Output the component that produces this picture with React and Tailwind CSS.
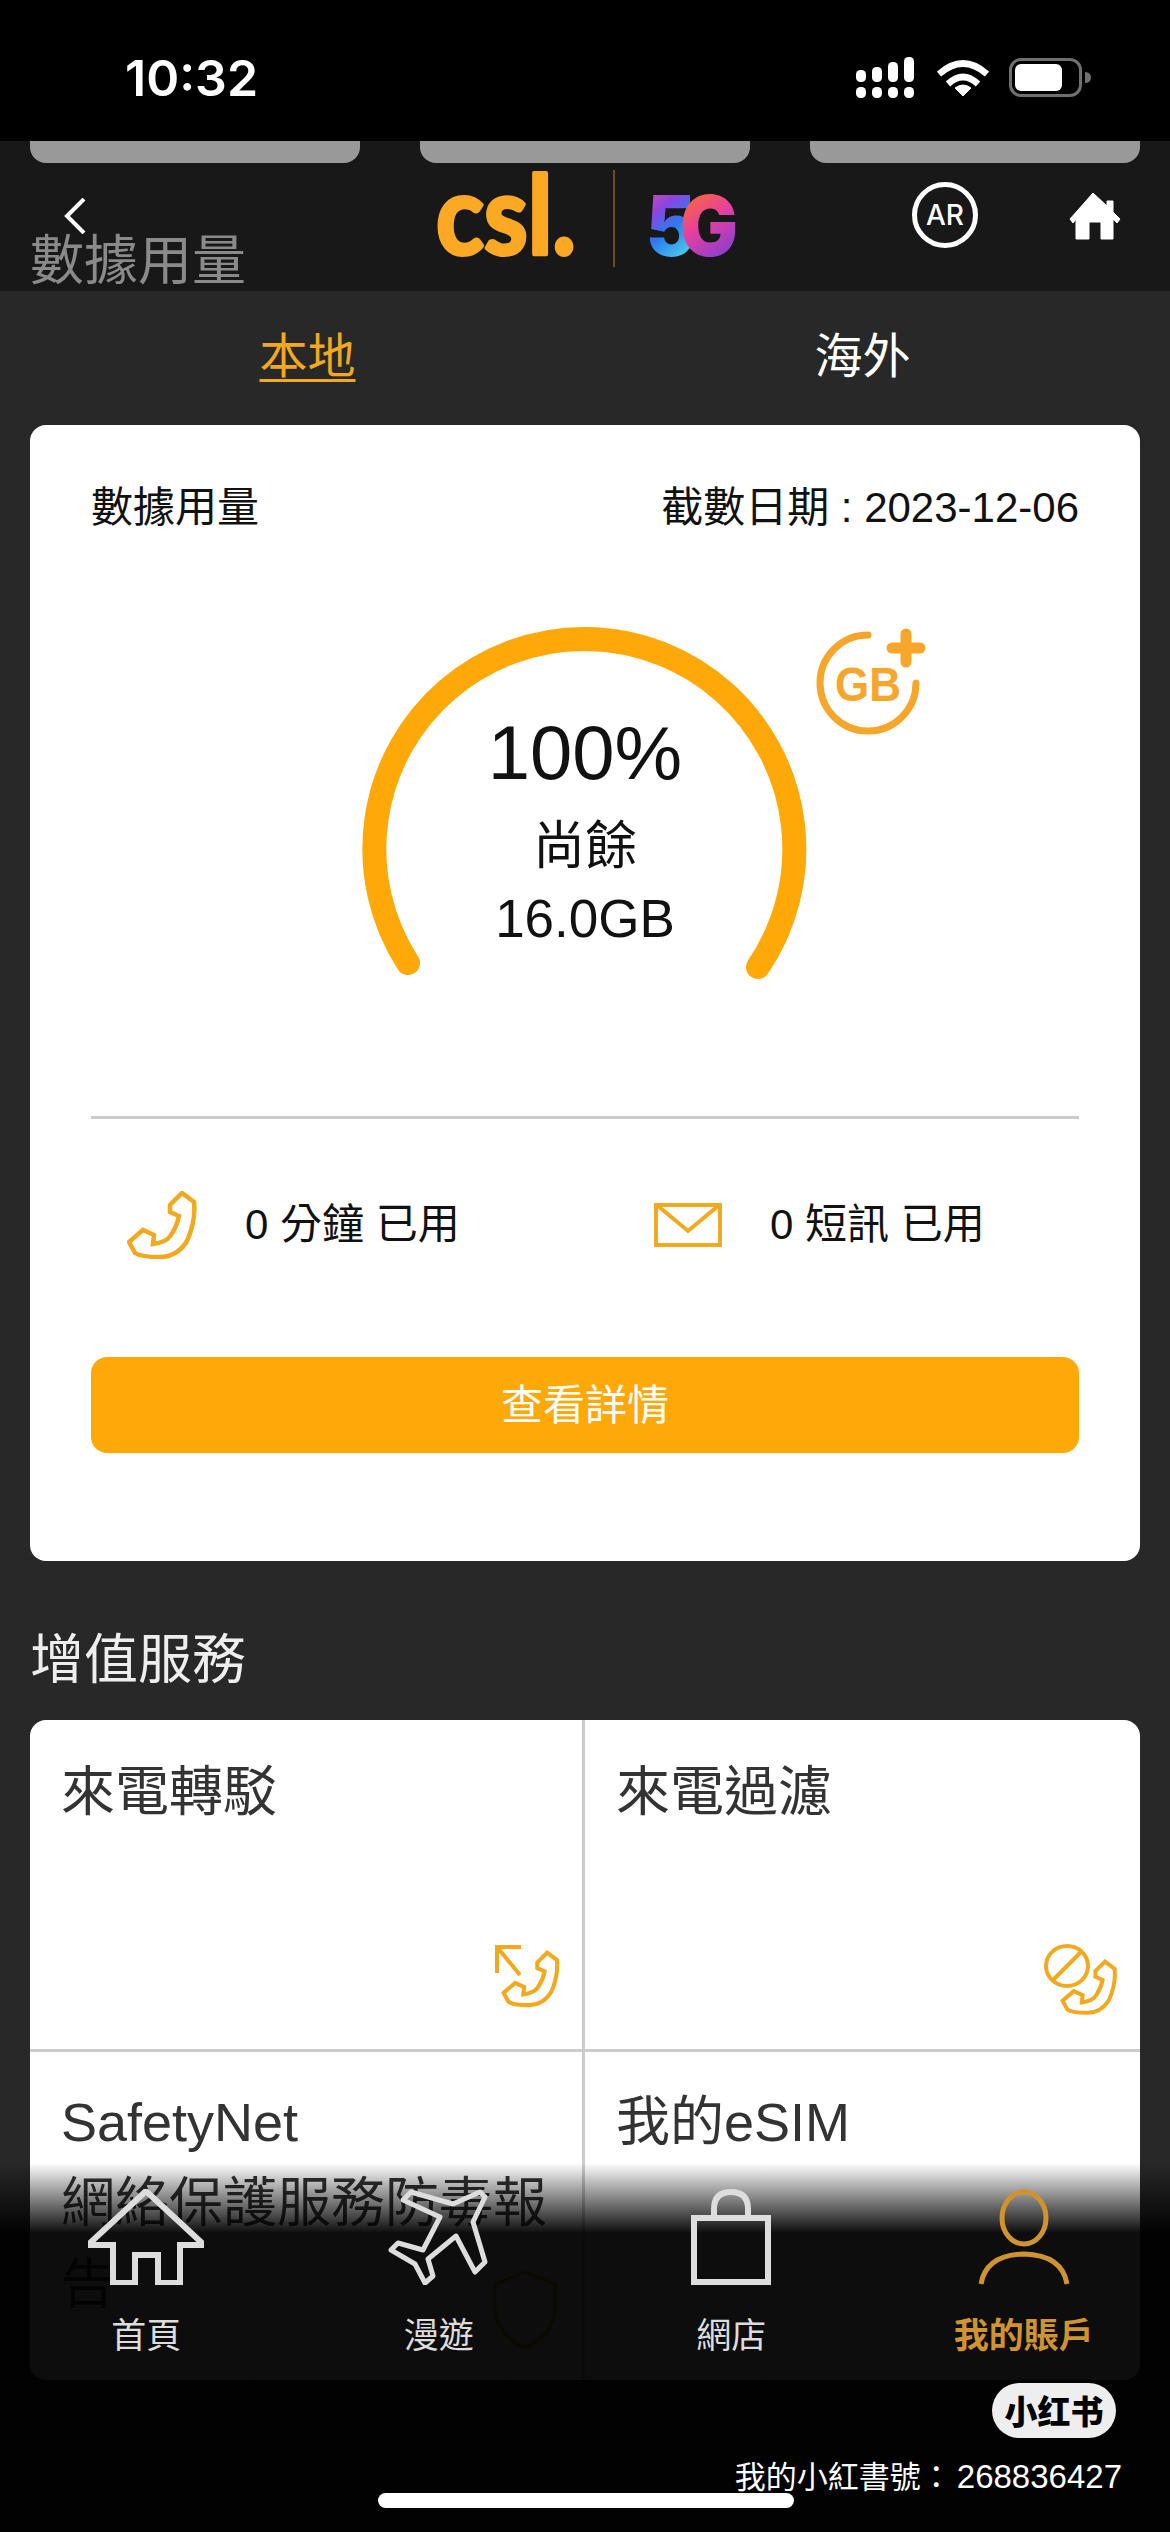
const sans = { fontFamily: '"Liberation Sans", "Noto Sans CJK TC", sans-serif' };
const orange = "#f2a91f";

// Handset outline shared by the call and service icons
function Handset({ width, height, color = orange, stroke = 4.5 }) {
  return (
    <svg width={width} height={height} viewBox="0 0 70 68" fill="none">
      <path
        d="M55 2 L67 11 Q69 30 60 50 Q50 66 33 66 Q14 66 8 62 L2 51 L16 39 L27 44 L26 53 Q40 51 44 44 Q50 35 52 25 L43 21 L43 14 Z"
        stroke={color}
        strokeWidth={stroke}
        strokeLinejoin="miter"
      />
    </svg>
  );
}

function StatusBar() {
  return (
    <div className="h-[141px] bg-black flex items-start text-white">
      <div className="ml-[125px] mt-[48px] text-[50px] leading-[60px] font-semibold" style={{ fontFamily: "Inter, sans-serif" }}>
        10:32
      </div>
      <svg className="ml-auto mt-[56px]" width="60" height="44" viewBox="0 0 60 44" fill="white">
        <rect x="1" y="14" width="10" height="12" rx="4.5" />
        <rect x="17" y="11" width="10" height="15" rx="4.5" />
        <rect x="33" y="6" width="10" height="20" rx="4.5" />
        <rect x="49" y="1" width="10" height="25" rx="4.5" />
        <rect x="1" y="31" width="10" height="11" rx="4.5" />
        <rect x="17" y="31" width="10" height="11" rx="4.5" />
        <rect x="33" y="31" width="10" height="11" rx="4.5" />
        <rect x="49" y="31" width="10" height="11" rx="4.5" />
      </svg>
      <svg className="ml-[22px] mt-[59px]" width="52" height="40" viewBox="0 0 52 40" fill="none" stroke="white" strokeWidth="6.5">
        <path d="M2 15 Q26 -6 50 15" />
        <path d="M11 25 Q26 11 41 25" />
        <path d="M26 37 L18 29 Q26 23 34 29 Z" fill="white" strokeWidth="1" />
      </svg>
      <div className="ml-[20px] mt-[58px] mr-[79px] flex items-center gap-[3px]">
        <div className="w-[73px] h-[39px] rounded-[12px] border-[3px] border-[#6f6f6f] p-[3px]">
          <div className="w-[47px] h-full bg-white rounded-[6px]" />
        </div>
        <div className="w-[6px] h-[11px] bg-[#6f6f6f] rounded-r-full" />
      </div>
    </div>
  );
}

function Logo() {
  return (
    <svg className="mt-[2px] overflow-visible" width="315" height="105" viewBox="0 0 315 105">
      <defs>
        <linearGradient id="five" x1="0.1" y1="0" x2="0.5" y2="1">
          <stop offset="0" stopColor="#ff4f8f" />
          <stop offset="0.35" stopColor="#8a45e0" />
          <stop offset="0.6" stopColor="#2a7cf0" />
          <stop offset="1" stopColor="#55dfe8" />
        </linearGradient>
        <linearGradient id="gee" x1="0.3" y1="0" x2="0.7" y2="1">
          <stop offset="0" stopColor="#ff7a10" />
          <stop offset="0.45" stopColor="#e83fa0" />
          <stop offset="1" stopColor="#6a3ee0" />
        </linearGradient>
      </defs>
      <text
        x="6"
        y="89"
        fontFamily="Lato, sans-serif"
        fontWeight="700"
        fontSize="110"
        fill="#fba824"
        stroke="#fba824"
        strokeWidth="4"
        strokeLinejoin="round"
        textLength="140"
        lengthAdjust="spacingAndGlyphs"
      >
        csl.
      </text>
      <rect x="183" y="5" width="2" height="97" fill="#6b4e22" />
      <text x="216" y="91" fontFamily="Inter, sans-serif" fontWeight="900" fontSize="84" fill="url(#five)" textLength="50" lengthAdjust="spacingAndGlyphs">
        5
      </text>
      <text x="250" y="91" fontFamily="Inter, sans-serif" fontWeight="900" fontSize="84" fill="url(#gee)" textLength="58" lengthAdjust="spacingAndGlyphs">
        G
      </text>
    </svg>
  );
}

function Header() {
  return (
    <div className="h-[150px] bg-[#181818]">
      <div className="grid grid-cols-3 gap-[60px] px-[30px]">
        <div className="h-[22px] bg-[#999999] rounded-b-[16px]" />
        <div className="h-[22px] bg-[#999999] rounded-b-[16px]" />
        <div className="h-[22px] bg-[#999999] rounded-b-[16px]" />
      </div>
      <div className="flex items-start pl-[30px]">
        <div className="w-[400px]">
          <svg className="ml-[33px] mt-[35px]" width="24" height="36" viewBox="0 0 24 36" fill="none" stroke="white" strokeWidth="4">
            <path d="M21 1 L4 18 L21 35" />
          </svg>
          <div className="text-[54px] leading-[54px] text-[#8a8a8a]" style={sans}>數據用量</div>
        </div>
        <Logo />
        <div className="ml-[167px] mt-[19px] w-[66px] h-[66px] rounded-full border-[5px] border-white flex items-center justify-center text-white text-[28px] font-medium" style={{ fontFamily: "Inter, sans-serif" }}>
          AR
        </div>
        <svg className="ml-[91px] mt-[29px]" width="52" height="48" viewBox="0 0 52 48" fill="white" stroke="white" strokeWidth="1" strokeLinejoin="round">
          <path d="M24 1 L38 14 L38 9 L44 9 L44 20 L51 27 L48 31 L44 27 L44 47 L32 47 L32 30 L20 30 L20 47 L7 47 L7 27 L4 31 L1 27 Z" />
        </svg>
      </div>
    </div>
  );
}

function Gauge() {
  return (
    <div className="relative w-[470px] h-[365px] mt-[87px] mx-auto">
      <svg width="470" height="365" viewBox="0 0 470 365" fill="none">
        <path d="M58 343 A210 210 0 1 1 408 347" stroke="#ffa908" strokeWidth="24" strokeLinecap="round" />
      </svg>
      <div className="absolute inset-0 flex flex-col items-center pt-[83px] text-[#111111]" style={sans}>
        <div className="text-[76px] leading-[100px]">100%</div>
        <div className="text-[52px] leading-[60px] mt-[13px]">尚餘</div>
        <div className="text-[53px] leading-[60px] mt-[13px]">16.0GB</div>
      </div>
      <svg className="absolute left-[466px] top-[8px]" width="110" height="110" viewBox="0 0 110 110" fill="none">
        <path d="M52 7 A48 48 0 1 0 100 55" stroke="#f6a72b" strokeWidth="7" strokeLinecap="round" />
        <path d="M90 6 V34 M76 20 H104" stroke="#f6a72b" strokeWidth="11" strokeLinecap="round" />
        <text x="19" y="73" fontFamily="Liberation Sans, sans-serif" fontWeight="700" fontSize="48" fill="#f6a72b" textLength="66" lengthAdjust="spacingAndGlyphs">GB</text>
      </svg>
    </div>
  );
}

function UsageCard() {
  return (
    <div className="mx-[30px] bg-white rounded-[16px] px-[61px] pt-[58px] pb-[108px]" style={sans}>
      <div className="flex justify-between text-[42px] leading-[50px] text-[#111111]">
        <span>數據用量</span>
        <span>截數日期 : 2023-12-06</span>
      </div>
      <Gauge />
      <div className="h-[3px] bg-[#cccccc] mt-[131px]" />
      <div className="flex items-center h-[70px] mt-[71px] text-[42px] leading-[50px] text-[#111111]">
        <div className="ml-[36px] w-[118px]">
          <Handset width={70} height={68} />
        </div>
        <span className="w-[409px]">0 分鐘 已用</span>
        <svg width="68" height="44" viewBox="0 0 68 44" fill="none" stroke={orange} strokeWidth="4">
          <rect x="2" y="2" width="64" height="40" />
          <path d="M4 3 L34 28 L64 3" />
        </svg>
        <span className="ml-[48px]">0 短訊 已用</span>
      </div>
      <div className="mt-[97px] h-[96px] rounded-[16px] bg-[#ffa908] flex items-center justify-center text-[42px] text-white">
        查看詳情
      </div>
    </div>
  );
}

function ServiceGrid() {
  return (
    <div className="mx-[30px] mt-[25px] bg-white rounded-[16px] h-[660px] overflow-hidden grid grid-cols-2 grid-rows-[332px_1fr] text-[54px] leading-[81px] text-[#333333]" style={sans}>
      <div className="border-r-[3px] border-b-[3px] border-[#cccccc] pl-[31px] pt-[32px] flex flex-col justify-between">
        <div>來電轉駁</div>
        <div className="flex justify-end pr-[22px] pb-[40px]">
          <svg width="66" height="66" viewBox="0 0 66 66" fill="none">
            <path d="M27 4 H3 V30 M3 4 L26 32" stroke={orange} strokeWidth="4" />
            <g transform="translate(8 8) scale(0.82)">
              <path d="M55 2 L67 11 Q69 30 60 50 Q50 66 33 66 Q14 66 8 62 L2 51 L16 39 L27 44 L26 53 Q40 51 44 44 Q50 35 52 25 L43 21 L43 14 Z" stroke={orange} strokeWidth="5" />
            </g>
          </svg>
        </div>
      </div>
      <div className="border-b-[3px] border-[#cccccc] pl-[31px] pt-[32px] flex flex-col justify-between">
        <div>來電過濾</div>
        <div className="flex justify-end pr-[23px] pb-[33px]">
          <svg width="73" height="72" viewBox="0 0 73 72" fill="none">
            <ellipse cx="23" cy="22" rx="21" ry="20" stroke={orange} strokeWidth="4" />
            <path d="M9 36 L37 8" stroke={orange} strokeWidth="4" />
            <g transform="translate(17 16) scale(0.8)">
              <path d="M55 2 L67 11 Q69 30 60 50 Q50 66 33 66 Q14 66 8 62 L2 51 L16 39 L27 44 L26 53 Q40 51 44 44 Q50 35 52 25 L43 21 L43 14 Z" stroke={orange} strokeWidth="5" />
            </g>
          </svg>
        </div>
      </div>
      <div className="relative border-r-[3px] border-[#cccccc] pl-[31px] pr-[30px] pt-[30px]">
        SafetyNet
        <br />
        網絡保護服務防毒報告
        <svg className="absolute left-[462px] top-[218px]" width="66" height="80" viewBox="0 0 66 80" fill="none" stroke={orange} strokeWidth="3">
          <path d="M33 2 L63 14 V40 Q60 66 33 78 Q6 66 3 40 V14 Z" />
        </svg>
      </div>
      <div className="pl-[31px] pt-[30px]">我的eSIM</div>
    </div>
  );
}

function NavItem({ label, active, children }) {
  return (
    <div className="flex flex-col items-center">
      <div className="h-[96px] flex items-end">{children}</div>
      <div className={`mt-[31px] text-[35px] leading-[40px] ${active ? "text-[#cf9430] font-bold" : "text-[#dddddd]"}`}>{label}</div>
    </div>
  );
}

function BottomBar() {
  const line = "#dddddd";
  return (
    <div className="absolute left-0 right-0 bottom-0 h-[369px] flex flex-col bg-[linear-gradient(to_bottom,rgba(0,0,0,0)_0px,rgba(0,0,0,0.95)_70px)]" style={sans}>
      <div className="grid grid-cols-4 pt-[26px]">
        <NavItem label="首頁">
          <svg width="116" height="96" viewBox="0 0 116 96" fill="none" stroke={line} strokeWidth="6" strokeLinejoin="miter">
            <path d="M58 2 L3 53 V56 H25 V94 H47 V66 H70 V94 H92 V56 H113 V53 Z" />
          </svg>
        </NavItem>
        <NavItem label="漫遊">
          <svg width="102" height="96" viewBox="15 10 102 96" fill="none" stroke={line} strokeWidth="5" strokeLinejoin="round">
            <path d="M30 21 L38 13 L80 25 L107 13 L112 18 L100 43 L112 83 L102 93 L83 57 L55 80 L60 97 L52 104 L42 85 L18 71 L25 64 L50 71 L67 38 Z" />
          </svg>
        </NavItem>
        <NavItem label="網店">
          <svg width="80" height="96" viewBox="0 0 80 96" fill="none" stroke={line}>
            <path d="M23 28 V20 Q23 3 40 3 Q57 3 57 20 V28" strokeWidth="6" />
            <rect x="3" y="29" width="74" height="64" strokeWidth="6" />
          </svg>
        </NavItem>
        <NavItem label="我的賬戶" active>
          <svg width="92" height="96" viewBox="0 0 92 96" fill="none" stroke="#cf9430" strokeWidth="5">
            <ellipse cx="46" cy="29" rx="22" ry="26" />
            <path d="M3 95 Q8 66 46 65 Q84 66 89 95" />
          </svg>
        </NavItem>
      </div>
      <div className="self-end mr-[54px] mt-[27px] w-[124px] h-[55px] rounded-full bg-[#eeeeee] flex items-center justify-center text-[33px] font-black text-black" style={{ fontFamily: '"Noto Sans CJK SC", sans-serif' }}>
        小红书
      </div>
      <div className="self-end mr-[48px] mt-[19px] text-[31px] leading-[40px] text-white">
        我的小紅書號：<span className="ml-[5px] text-[33px]">268836427</span>
      </div>
      <div className="absolute left-[378px] bottom-[24px] w-[416px] h-[15px] rounded-full bg-white" />
    </div>
  );
}

export default function App() {
  return (
    <div className="relative w-[1170px] h-[2532px] overflow-hidden bg-[#282828]" style={sans}>
      <StatusBar />
      <Header />
      <div className="grid grid-cols-2 px-[30px] h-[134px] pt-[38px] text-[48px] leading-[56px]">
        <div className="text-center text-[#f2a91f] underline underline-offset-[6px] decoration-[3px]">本地</div>
        <div className="text-center text-white">海外</div>
      </div>
      <UsageCard />
      <div className="mt-[64px] px-[30px] text-[54px] leading-[70px] text-[#eeeeee]">增值服務</div>
      <ServiceGrid />
      <BottomBar />
    </div>
  );
}
